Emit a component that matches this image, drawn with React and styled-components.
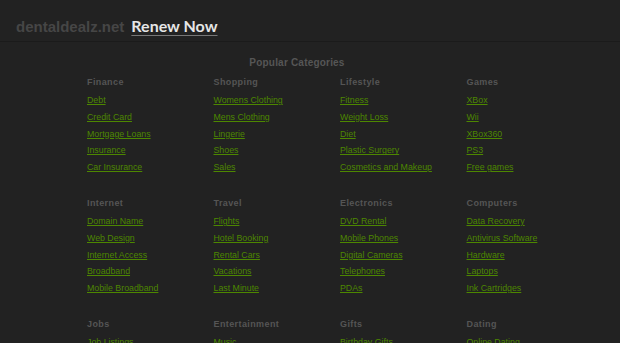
import React from 'react';
import styled, { createGlobalStyle } from 'styled-components';

const GlobalStyle = createGlobalStyle`
	html, body {
		margin: 0;
		padding: 0;
		background: #222222;
		font-family: 'Liberation Sans', Arial, sans-serif;
	}
`;

const Header = styled.div`
	height: 42px;
	display: flex;
	align-items: flex-end;
	padding: 0 0 6px 16px;
	box-sizing: border-box;
	border-bottom: 1px solid #1b1b1b;
`;

const Domain = styled.span`
	font-size: 15px;
	font-weight: 700;
	color: #464646;
	margin-right: 7px;
`;

const Renew = styled.a`
	font-family: Lato, 'Liberation Sans', sans-serif;
	font-size: 16px;
	font-weight: 700;
	color: #e6e6e6;
	text-decoration: underline;
	text-decoration-color: #777;
	text-underline-offset: 3px;
`;

const Main = styled.div`
	padding: 15px 0 0 87px;
`;

const Title = styled.div`
	width: 420px;
	text-align: center;
	font-size: 10px;
	font-weight: 700;
	color: #565656;
	letter-spacing: 0.2px;
	margin-bottom: 9px;
`;

const Grid = styled.div`
	display: grid;
	grid-template-columns: repeat(4, 126.5px);
	row-gap: 22px;
`;

const Category = styled.div`
	display: flex;
	flex-direction: column;
`;

const Heading = styled.div`
	font-size: 9px;
	font-weight: 700;
	color: #555555;
	letter-spacing: 0.4px;
	margin-bottom: 5px;
`;

const Item = styled.a`
	font-size: 8.8px;
	line-height: 16.8px;
	color: #4d8700;
	text-decoration: underline;
	text-underline-offset: 1px;
`;

const categories = [
	['Finance', ['Debt', 'Credit Card', 'Mortgage Loans', 'Insurance', 'Car Insurance']],
	['Shopping', ['Womens Clothing', 'Mens Clothing', 'Lingerie', 'Shoes', 'Sales']],
	['Lifestyle', ['Fitness', 'Weight Loss', 'Diet', 'Plastic Surgery', 'Cosmetics and Makeup']],
	['Games', ['XBox', 'Wii', 'XBox360', 'PS3', 'Free games']],
	['Internet', ['Domain Name', 'Web Design', 'Internet Access', 'Broadband', 'Mobile Broadband']],
	['Travel', ['Flights', 'Hotel Booking', 'Rental Cars', 'Vacations', 'Last Minute']],
	['Electronics', ['DVD Rental', 'Mobile Phones', 'Digital Cameras', 'Telephones', 'PDAs']],
	['Computers', ['Data Recovery', 'Antivirus Software', 'Hardware', 'Laptops', 'Ink Cartridges']],
	['Jobs', ['Job Listings', 'Careers', 'Employment', 'Resume', 'Part Time']],
	['Entertainment', ['Music', 'Movies', 'Concerts', 'Theater', 'Events']],
	['Gifts', ['Birthday Gifts', 'Flowers', 'Gift Cards', 'Jewelry', 'Wedding Gifts']],
	['Dating', ['Online Dating', 'Singles', 'Personals', 'Chat', 'Matchmaking']],
];

const App = () => (
	<>
		<GlobalStyle />
		<Header>
			<Domain>dentaldealz.net</Domain>
			<Renew href="#">Renew Now</Renew>
		</Header>
		<Main>
			<Title>Popular Categories</Title>
			<Grid>
				{categories.map(([name, items]) => (
					<Category key={name}>
						<Heading>{name}</Heading>
						{items.map((item) => (
							<Item key={item} href="#">
								{item}
							</Item>
						))}
					</Category>
				))}
			</Grid>
		</Main>
	</>
);

export default App;
